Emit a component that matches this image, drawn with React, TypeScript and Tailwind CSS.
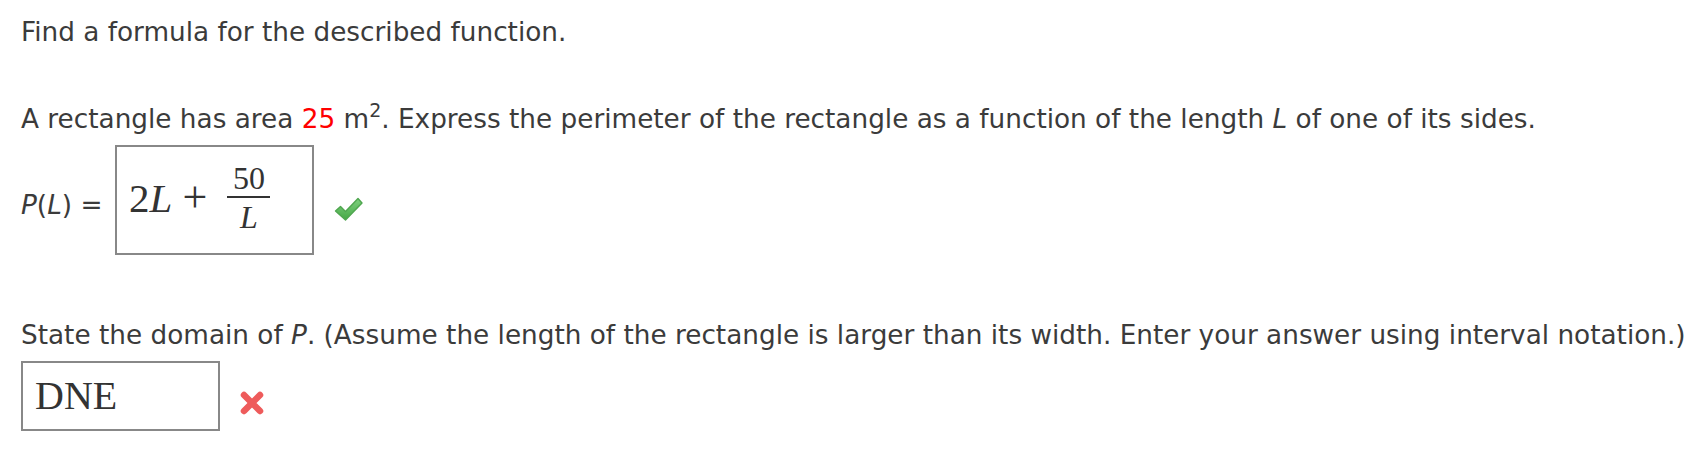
import React from "react";

const sans = { fontFamily: '"DejaVu Sans", Verdana, sans-serif' };
const serif = { fontFamily: '"Liberation Serif", "DejaVu Serif", serif' };

function Check() {
  return (
    <svg width="31" height="28" viewBox="0 0 31 28">
      <defs>
        <linearGradient id="g" x1="0" y1="0" x2="0" y2="1">
          <stop offset="0" stopColor="#7fd07f" />
          <stop offset="1" stopColor="#45a845" />
        </linearGradient>
      </defs>
      <path d="M2.5 16 L7.5 11.5 L12.5 16.5 L25 3.5 L29 8 L12.5 25 Z" fill="url(#g)" stroke="#4fa64f" strokeWidth="1.4" strokeLinejoin="round" />
    </svg>
  );
}

function Cross() {
  return (
    <svg width="26" height="26" viewBox="0 0 26 26">
      <path d="M5 5 L21 21 M21 5 L5 21" stroke="#ee5b5b" strokeWidth="6.5" strokeLinecap="round" />
    </svg>
  );
}

export default function App() {
  return (
    <div className="w-[1696px] h-[454px] bg-white text-[#3b3b3b] pl-[21px] pt-[17px]" style={sans}>
      <p className="text-[26.3px] leading-[30px]">Find a formula for the described function.</p>
      <p className="text-[26.3px] leading-[30px] mt-[57px]">
        A rectangle has area <span className="text-[#ff0000]">25</span> m<sup className="text-[19px] relative -top-[11px]">2</sup>. Express the perimeter of the rectangle as a function of the length <i>L</i> of one of its sides.
      </p>
      <div className="flex items-start mt-[11px]">
        <span className="text-[26.3px] leading-[30px] w-[94px] mt-[45px]">
          <i>P</i>(<i>L</i>) =
        </span>
        <div className="w-[199px] h-[110px] border-2 border-[#888] flex items-center pl-[12px]" style={serif}>
          <span className="text-[41px] text-[#333] mb-[4px]">
            2<i>L</i> <span className="text-[44px]">+</span>
          </span>
          <span className="inline-flex flex-col items-center ml-[20px] text-[32px] text-[#333] mb-[4px]">
            <span className="leading-[31px]">50</span>
            <span className="w-[43px] h-[2px] bg-[#333] mt-[2px] mb-[4px]"></span>
            <i className="leading-[31px]">L</i>
          </span>
        </div>
        <div className="ml-[19px] mt-[50px]">
          <Check />
        </div>
      </div>
      <p className="text-[26.3px] leading-[30px] mt-[65px]">
        State the domain of <i>P</i>. (Assume the length of the rectangle is larger than its width. Enter your answer using interval notation.)
      </p>
      <div className="flex items-start mt-[11px]">
        <div className="w-[199px] h-[70px] border-2 border-[#888] flex items-center pl-[12px]" style={serif}>
          <span className="text-[40px] leading-[44px] text-[#333]">DNE</span>
        </div>
        <div className="ml-[19px] mt-[29px]">
          <Cross />
        </div>
      </div>
    </div>
  );
}
